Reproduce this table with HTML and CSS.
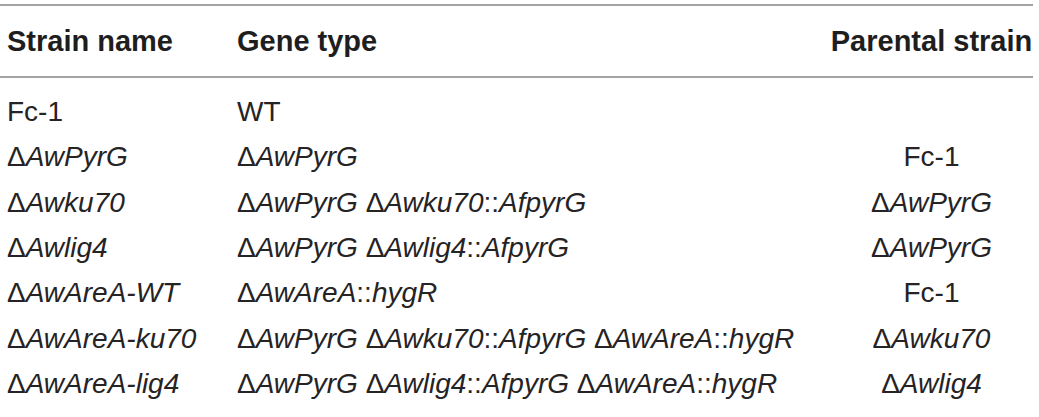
FILE: index.html
```html
<!DOCTYPE html>
<html lang="en">
<head>
<meta charset="utf-8">
<title>Strains</title>
<link rel="stylesheet" href="styles.css">
</head>
<body>
<table class="strains">
  <colgroup>
    <col class="c-name">
    <col class="c-gene">
    <col class="c-parent">
  </colgroup>
  <thead>
    <tr>
      <th class="name">Strain name</th>
      <th class="gene">Gene type</th>
      <th class="parent">Parental strain</th>
    </tr>
  </thead>
  <tbody>
    <tr>
      <td class="name">Fc-1</td>
      <td class="gene">WT</td>
      <td class="parent"></td>
    </tr>
    <tr>
      <td class="name">Δ<i>AwPyrG</i></td>
      <td class="gene">Δ<i>AwPyrG</i></td>
      <td class="parent">Fc-1</td>
    </tr>
    <tr>
      <td class="name">Δ<i>Awku70</i></td>
      <td class="gene">Δ<i>AwPyrG</i> Δ<i>Awku70</i>::<i>AfpyrG</i></td>
      <td class="parent">Δ<i>AwPyrG</i></td>
    </tr>
    <tr>
      <td class="name">Δ<i>Awlig4</i></td>
      <td class="gene">Δ<i>AwPyrG</i> Δ<i>Awlig4</i>::<i>AfpyrG</i></td>
      <td class="parent">Δ<i>AwPyrG</i></td>
    </tr>
    <tr>
      <td class="name">Δ<i>AwAreA-WT</i></td>
      <td class="gene">Δ<i>AwAreA</i>::<i>hygR</i></td>
      <td class="parent">Fc-1</td>
    </tr>
    <tr>
      <td class="name">Δ<i>AwAreA-ku70</i></td>
      <td class="gene">Δ<i>AwPyrG</i> Δ<i>Awku70</i>::<i>AfpyrG</i> Δ<i>AwAreA</i>::<i>hygR</i></td>
      <td class="parent">Δ<i>Awku70</i></td>
    </tr>
    <tr>
      <td class="name">Δ<i>AwAreA-lig4</i></td>
      <td class="gene">Δ<i>AwPyrG</i> Δ<i>Awlig4</i>::<i>AfpyrG</i> Δ<i>AwAreA</i>::<i>hygR</i></td>
      <td class="parent">Δ<i>Awlig4</i></td>
    </tr>
  </tbody>
</table>
</body>
</html>
```

FILE: styles.css
```css
html, body {
  margin: 0;
  padding: 0;
  background: #ffffff;
}

body {
  font-family: "Liberation Sans", Arial, sans-serif;
  color: #262324;
}

.strains {
  width: 1033px;
  margin-top: 4px;
  border-collapse: collapse;
  table-layout: fixed;
  border-top: 2px solid #a3a3a3;
  font-size: 28px;
}

.c-name { width: 237px; }
.c-gene { width: 593px; }
.c-parent { width: 203px; }

.strains th,
.strains td {
  padding: 0;
  white-space: nowrap;
  vertical-align: middle;
}

.strains thead th {
  height: 70px;
  font-size: 29px;
  font-weight: bold;
  color: #1e1e1e;
  border-bottom: 2px solid #a3a3a3;
}

.strains tbody td {
  height: 45.33px;
  line-height: 45.33px;
}

.strains tbody tr:first-child td {
  padding-top: 11px;
}

.name {
  text-align: left;
  padding-left: 7px !important;
}

.gene {
  text-align: left;
}

.parent {
  text-align: center;
}

.strains i {
  font-style: italic;
}
```
